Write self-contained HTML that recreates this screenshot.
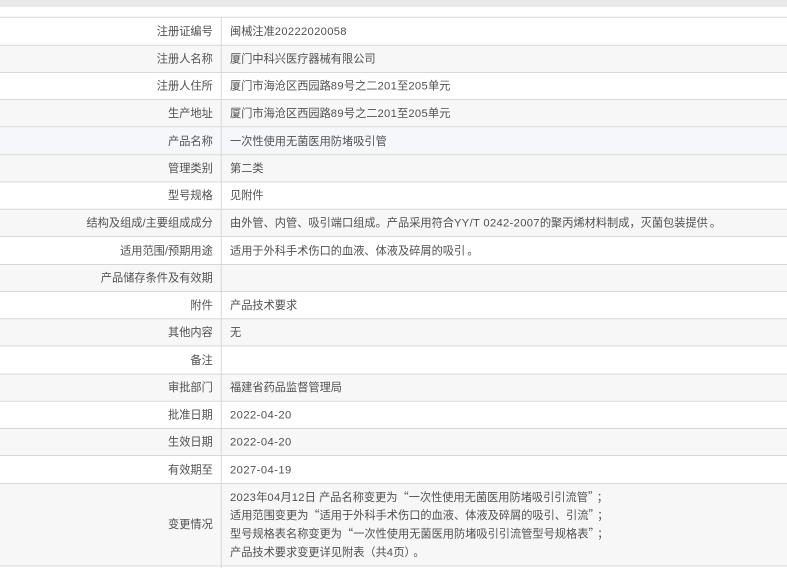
<!DOCTYPE html>
<html lang="zh-CN"><head><meta charset="utf-8"><style>
html,body{margin:0;padding:0;background:#fff;width:787px;height:568px;overflow:hidden}
#bar{position:absolute;left:0;top:0;width:787px;height:7px;background:#e9e9e9}
#w{position:absolute;left:0;top:0;width:983.75px;height:710px;overflow:hidden;transform:scale(.8);transform-origin:0 0;font:14px/23px "Liberation Sans","Noto Sans CJK SC",sans-serif;color:#505050;filter:blur(.3px)}
.r{position:absolute;left:0;width:983.75px;height:34.25px;box-sizing:border-box;border-top:1.5px solid #cfcfcf}
.g{background:#f7f7f7}.h{background:#f5f7fb}
.l,.v{position:absolute;top:0;bottom:0;display:flex;align-items:center;padding-top:.6px}
.l{left:0;width:266px;justify-content:flex-end;text-align:right}
.v{left:276px;right:0;padding-left:10.5px;border-left:1.5px solid #cfcfcf}
.n{letter-spacing:.4px}
.d{letter-spacing:.55px}
.q{font-family:"Noto Sans CJK SC",sans-serif}
.p{position:relative;left:4px}
.m{position:relative;left:2.5px}
</style></head><body>
<div id="bar"></div>
<div id="w">
<div class="r" style="top:21.25px"><div class="l">注册证编号</div><div class="v"><span>闽械注准<span class="n">20222020058</span></span></div></div>
<div class="r g" style="top:55.5px"><div class="l">注册人名称</div><div class="v">厦门中科兴医疗器械有限公司</div></div>
<div class="r" style="top:89.75px"><div class="l">注册人住所</div><div class="v"><span>厦门市海沧区西园路<span class="n">89</span>号之二<span class="n">201</span>至<span class="n">205</span>单元</span></div></div>
<div class="r g" style="top:124px"><div class="l">生产地址</div><div class="v"><span>厦门市海沧区西园路<span class="n">89</span>号之二<span class="n">201</span>至<span class="n">205</span>单元</span></div></div>
<div class="r h" style="top:158.25px"><div class="l">产品名称</div><div class="v">一次性使用无菌医用防堵吸引管</div></div>
<div class="r g" style="top:192.5px"><div class="l">管理类别</div><div class="v">第二类</div></div>
<div class="r" style="top:226.75px"><div class="l">型号规格</div><div class="v">见附件</div></div>
<div class="r g" style="top:261px"><div class="l">结构及组成/主要组成成分</div><div class="v"><span>由外管、内管、吸引端口组成。产品采用符合<span class="n">YY/T 0242-2007</span>的聚丙烯材料制成，灭菌包装提供<span class="m">。</span></span></div></div>
<div class="r" style="top:295.25px"><div class="l">适用范围/预期用途</div><div class="v"><span>适用于外科手术伤口的血液、体液及碎屑的吸引<span class="m">。</span></span></div></div>
<div class="r g" style="top:329.5px"><div class="l">产品储存条件及有效期</div><div class="v"></div></div>
<div class="r" style="top:363.75px"><div class="l">附件</div><div class="v">产品技术要求</div></div>
<div class="r g" style="top:398px"><div class="l">其他内容</div><div class="v">无</div></div>
<div class="r" style="top:432.25px"><div class="l">备注</div><div class="v"></div></div>
<div class="r g" style="top:466.5px"><div class="l">审批部门</div><div class="v">福建省药品监督管理局</div></div>
<div class="r" style="top:500.75px"><div class="l">批准日期</div><div class="v"><span class="d">2022-04-20</span></div></div>
<div class="r g" style="top:535px"><div class="l">生效日期</div><div class="v"><span class="d">2022-04-20</span></div></div>
<div class="r" style="top:569.25px"><div class="l">有效期至</div><div class="v"><span class="d">2027-04-19</span></div></div>
<div class="r g" style="top:603.5px;height:103px"><div class="l">变更情况</div><div class="v"><span><span class="n">2023</span>年<span class="n">04</span>月<span class="n">12</span>日 产品名称变更为<span class="q">“</span>一次性使用无菌医用防堵吸引引流管<span class="q">”</span><span class="p">；</span><br>适用范围变更为<span class="q">“</span>适用于外科手术伤口的血液、体液及碎屑的吸引、引流<span class="q">”</span><span class="p">；</span><br>型号规格表名称变更为<span class="q">“</span>一次性使用无菌医用防堵吸引引流管型号规格表<span class="q">”</span><span class="p">；</span><br>产品技术要求变更详见附表（共<span class="n">4</span>页）<span class="p">。</span></span></div></div>
<div class="r" style="top:706.5px;height:3.5px"><div class="v"></div></div>
</div>
</body></html>
